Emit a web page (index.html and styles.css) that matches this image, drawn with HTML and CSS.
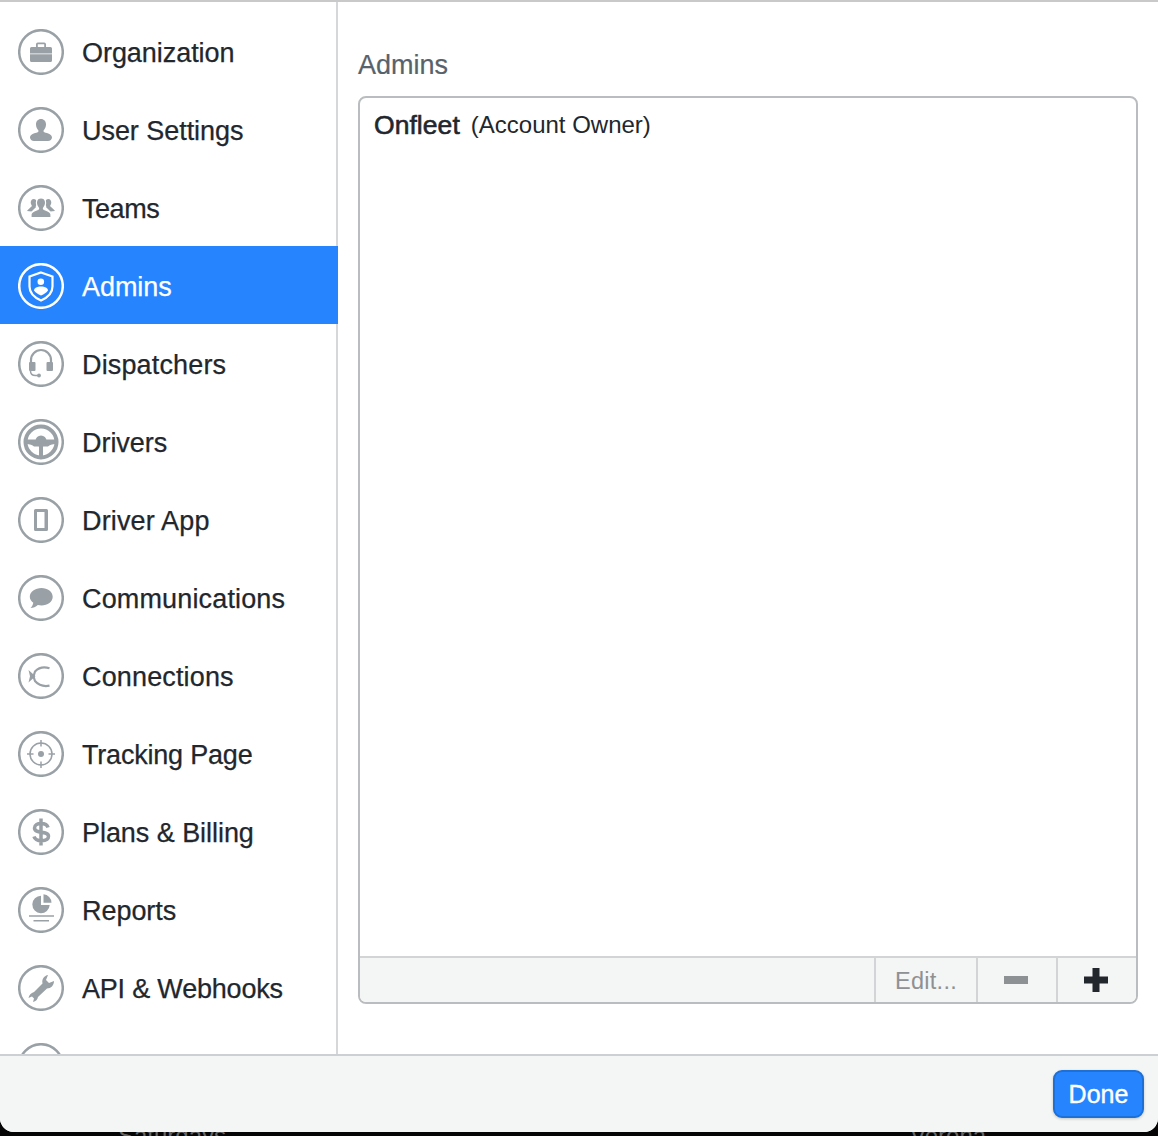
FILE: index.html
```html
<!DOCTYPE html>
<html lang="en">
<head>
<meta charset="utf-8">
<title>Admins</title>
<link rel="stylesheet" href="styles.css">
</head>
<body>
<div class="dialog">
  <div class="main">
    <nav class="sidebar">
      <a class="item"><svg class="ico" viewBox="0 0 46 46"><circle class="ring" cx="23" cy="23" r="21.8"/><path class="fill evenodd" d="M12 19.500a1.500 1.500 0 0 1 1.500-1.500H18v-2.700a1.800 1.800 0 0 1 1.800-1.800h6.400a1.800 1.800 0 0 1 1.800 1.800V18h4.500a1.500 1.500 0 0 1 1.500 1.500v5H12zM19.800 18h6.400v-2.700h-6.400zM12 25.200h22v6.300a1.500 1.500 0 0 1-1.500 1.500h-19a1.500 1.500 0 0 1-1.500-1.500z"/></svg><span>Organization</span></a>
      <a class="item"><svg class="ico" viewBox="0 0 46 46"><circle class="ring" cx="23" cy="23" r="21.800"/><path class="fill" d="M23 12c3 0 5 2.300 5 5.500 0 2.500-1 4.300-2.200 5.700-.6.700-.4 1.600.5 2 3.400 1.100 7.700 2 7.700 5.300 0 1.900-1.800 3.500-4 3.500H16c-2.200 0-4-1.600-4-3.500 0-3.300 4.300-4.200 7.700-5.300.9-.4 1.100-1.300.5-2-1.200-1.400-2.200-3.200-2.200-5.700 0-3.200 2-5.500 5-5.500z"/></svg><span>User Settings</span></a>
      <a class="item"><svg class="ico" viewBox="0 0 46 46"><circle class="ring" cx="23" cy="23" r="21.800"/><path class="fill" d="M15.500 14c2 0 3.500 1.500 3.500 3.600 0 1.300-.5 2.400-1.200 3.300-.3.400-.2.900.3 1.100l-4.600 4.500-4.500-.5 1-1.200 3.500-3.200c.4-.2.500-.6.200-1-.6-.9-1-2-1-3 0-2 1.300-3.600 2.800-3.600zM30.500 14c1.500 0 2.800 1.600 2.800 3.600 0 1-.4 2.100-1 3-.3.400-.2.800.2 1l3.500 3.200 1 1.200-4.500.5-4.600-4.500c.5-.2.600-.7.300-1.100-.7-.9-1.200-2-1.200-3.300 0-2.100 1.500-3.600 3.500-3.600z"/><path class="fill cut" d="M23 13c2.800 0 4.600 2 4.600 4.900 0 2-.9 3.700-1.900 4.900-.5.700-.3 1.300.5 1.700 3 1.100 6.800 2 6.800 5v3H13v-3c0-3 3.800-3.900 6.800-5 .8-.4 1-1 .5-1.700-1-1.200-1.900-2.900-1.900-4.900 0-2.900 1.800-4.900 4.600-4.900z"/></svg><span class="teams">Teams</span></a>
      <a class="item active"><svg class="ico" viewBox="0 0 46 46"><circle class="ring" cx="23" cy="23" r="21.800"/><path class="line thick" d="M23 9.500l11.500 4v10c0 6.500-4.800 11-11.500 14-6.700-3-11.500-7.500-11.500-14v-10z"/><circle class="fill" cx="22.800" cy="18.700" r="3.300"/><path class="fill" d="M16 27.500c0-2.400 3-4 7-4s7 1.600 7 4c-1.400 2-4 3.700-7 4.900-3-1.200-5.600-2.900-7-4.900z"/></svg><span>Admins</span></a>
      <a class="item"><svg class="ico" viewBox="0 0 46 46"><circle class="ring" cx="23" cy="23" r="21.800"/><path class="line thick" d="M13 22v-3a10 10 0 0 1 20 0v3"/><rect class="fill" x="11" y="21" width="6.500" height="9" rx="1"/><rect class="fill" x="28.500" y="21" width="6.500" height="9" rx="1"/><path class="line" d="M12.500 30c0 3 2 4.500 5 4.500h3"/><circle class="fill" cx="21" cy="34.500" r="1.900"/></svg><span class="wide">Dispatchers</span></a>
      <a class="item"><svg class="ico" viewBox="0 0 46 46"><circle class="ring" cx="23" cy="23" r="21.800"/><circle class="line wheel" cx="23" cy="23" r="15.500"/><path class="fill" d="M8 20.500h30v4.500c-4 0-6.500 1-8 2.500h-14c-1.500-1.500-4-2.500-8-2.500z"/><circle class="fill" cx="23" cy="22" r="5.500"/><path class="fill" d="M21 26h4v12h-4z"/></svg><span>Drivers</span></a>
      <a class="item"><svg class="ico" viewBox="0 0 46 46"><circle class="ring" cx="23" cy="23" r="21.800"/><path class="fill evenodd" d="M17.500 12h11a1.500 1.500 0 0 1 1.500 1.500v19a1.500 1.500 0 0 1-1.500 1.500h-11a1.500 1.500 0 0 1-1.500-1.500v-19a1.500 1.500 0 0 1 1.500-1.500zM19 15v16h7.500V15z"/></svg><span class="wide">Driver App</span></a>
      <a class="item"><svg class="ico" viewBox="0 0 46 46"><circle class="ring" cx="23" cy="23" r="21.800"/><path class="fill" d="M23.500 13c6.200 0 11.200 3.800 11.200 8.700s-5 8.700-11.200 8.700c-1.300 0-2.500-.2-3.700-.5-2 1.800-4.500 3.100-7.300 3.100 1.400-1.300 2.400-3 2.800-5.300-2.200-1.500-3.500-3.700-3.500-6 0-4.900 5.500-8.700 11.700-8.700z"/></svg><span class="wide">Communications</span></a>
      <a class="item"><svg class="ico" viewBox="0 0 46 46"><circle class="ring" cx="23" cy="23" r="21.800"/><path class="line thick" d="M31.500 15.300c-5.500-1.800-10.800-.6-14.500 3.200l-1.500 5 1.500 4.500c3.700 4.300 9 5.700 14.500 4.700"/><path class="fill" d="M10.500 17l7 6.300-7 6.200 1.500-6.200z"/></svg><span class="wide">Connections</span></a>
      <a class="item"><svg class="ico" viewBox="0 0 46 46"><circle class="ring" cx="23" cy="23" r="21.800"/><circle class="line" cx="23" cy="23" r="11"/><circle class="fill" cx="23" cy="23" r="3"/><path class="line" d="M23 9v6.500M23 30.500V37M9 23h6.500M30.500 23H37"/></svg><span class="tight">Tracking Page</span></a>
      <a class="item"><svg class="ico" viewBox="0 0 46 46"><circle class="ring" cx="23" cy="23" r="21.800"/><path class="line dollar" d="M30 18.500c-.7-2.700-3.400-4-7-4-3.800 0-6.500 1.700-6.500 4.400 0 6.300 14 2.400 14 8.400 0 2.800-2.900 4.400-7 4.400-4 0-6.700-1.400-7.500-4.200M23 9.500v27"/></svg><span>Plans &amp; Billing</span></a>
      <a class="item"><svg class="ico" viewBox="0 0 46 46"><circle class="ring" cx="23" cy="23" r="21.800"/><path class="fill" d="M23 8.800v9.200h8.700a8.700 8.700 0 1 1-8.700-9.200z"/><path class="fill" d="M25.500 7.300a8.400 8.400 0 0 1 8 8.400h-8z"/><path class="line" d="M11 29h25M15.500 33.700H31"/></svg><span>Reports</span></a>
      <a class="item"><svg class="ico" viewBox="0 0 46 46"><circle class="ring" cx="23" cy="23" r="21.800"/><path class="fill" d="M30 10l-2 5 3 3 5-2c0 4.500-3 7.500-7 7.500L20 32c-.5 2.500-2 4.500-5 5l1-3.500-2-2-3.500 1.500c.5-3 2.500-5 5.500-6l8.500-8.500c-1-4.500 2-7.900 5.500-8.500z"/></svg><span class="tight">API &amp; Webhooks</span></a>
      <a class="item"><svg class="ico" viewBox="0 0 46 46"><circle class="ring" cx="23" cy="23" r="21.800"/></svg></a>
    </nav>
    <section class="content">
      <h2 class="title">Admins</h2>
      <div class="panel">
        <div class="list">
          <div class="entry"><strong>Onfleet</strong><span class="role">(Account Owner)</span></div>
        </div>
        <div class="tools">
          <button class="tool edit">Edit...</button>
          <button class="tool glyph"><svg class="sign" viewBox="0 0 26 26"><path class="minus" d="M1 9h24v8H1z"/></svg></button>
          <button class="tool glyph"><svg class="sign" viewBox="0 0 26 26"><path class="plus" d="M9.500 1h7v8.500H25v7h-8.500V25h-7v-8.500H1v-7h8.500z"/></svg></button>
        </div>
      </div>
    </section>
  </div>
  <footer class="footer"><button class="done">Done</button></footer>
</div>
<div class="behind"><span>Saturdays</span><span>Verona</span></div>
</body>
</html>
```

FILE: styles.css
```css
* { box-sizing: border-box; }
html, body { margin: 0; height: 100%; }
body {
  width: 1158px;
  height: 1136px;
  overflow: hidden;
  background: #050505;
  font-family: "Liberation Sans", Arial, sans-serif;
  color: #22272d;
}
.dialog {
  height: 1132px;
  display: flex;
  flex-direction: column;
  background: #fff;
  border-top: 2px solid #c9c9c9;
  border-radius: 0 0 14px 14px;
  overflow: hidden;
}
.main { flex: 1; display: flex; min-height: 0; }
.sidebar {
  width: 338px;
  flex: none;
  padding-top: 10px;
  background: linear-gradient(to left, #d6d7d8 2px, transparent 2px);
  overflow: hidden;
}
.item {
  display: flex;
  align-items: center;
  height: 78px;
  padding: 1px 0 0 18px;
  gap: 18px;
  font-size: 27px;
  letter-spacing: -0.05px;
  -webkit-text-stroke: 0.25px currentColor;
}
.item span { padding-top: 4px; }
.item .wide { letter-spacing: 0.15px; }
.item .tight { letter-spacing: -0.2px; }
.item .teams { letter-spacing: -0.45px; }
.item.active { background: #2684ff; color: #fff; }
.ico { width: 46px; height: 46px; flex: none; }
.ring { fill: none; stroke: #99a1a6; stroke-width: 2.500; }
.fill { fill: #99a1a6; }
.evenodd { fill-rule: evenodd; }
.cut { stroke: #fff; stroke-width: 1.200; }
.line { fill: none; stroke: #99a1a6; stroke-width: 1.500; }
.thick { stroke-width: 2.200; }
.wheel { stroke-width: 4; }
.dollar { stroke-width: 3.500; }
.active .ring, .active .line { stroke: #fff; }
.active .fill { fill: #fff; }
.content { flex: 1; padding: 48px 20px 0; min-width: 0; }
.title {
  margin: 0 0 16px;
  font-size: 27px;
  line-height: 30px;
  font-weight: 400;
  color: #58626b;
  -webkit-text-stroke: 0.2px #58626b;
}
.panel {
  height: 908px;
  display: flex;
  flex-direction: column;
  border: 2px solid #babdbf;
  border-radius: 8px;
  overflow: hidden;
}
.list { flex: 1; padding: 12px 14px; }
.entry { font-size: 24px; line-height: 30px; }
.entry strong {
  margin-right: 11px;
  font-size: 26.500px;
  font-weight: 400;
  letter-spacing: 0.05px;
  -webkit-text-stroke: 0.6px #22272d;
}
.role { vertical-align: 1px; }
.tools {
  height: 46px;
  flex: none;
  display: flex;
  justify-content: flex-end;
  background: #f4f5f5;
  border-top: 2px solid #d2d4d5;
}
.tool {
  border: 0;
  border-left: 2px solid #d2d4d5;
  background: none;
  padding: 0;
  font: inherit;
  display: flex;
  align-items: center;
  justify-content: center;
}
.edit { width: 102px; padding-top: 2px; font-size: 23.500px; letter-spacing: 0.3px; color: #8e9193; }
.glyph { width: 80px; padding-right: 2px; }
.sign { width: 26px; height: 26px; }
.minus { fill: #8e9193; }
.plus { fill: #22272d; }
.footer {
  height: 78px;
  flex: none;
  display: flex;
  justify-content: flex-end;
  align-items: flex-start;
  padding: 14px 14px 0 0;
  background: #f4f5f5;
  border-top: 2px solid #cdd0d3;
}
.done {
  width: 91px;
  height: 48px;
  border: 2px solid #1e6fd6;
  border-radius: 9px;
  background: #2684ff;
  color: #fff;
  font-family: inherit;
  font-size: 25px;
  -webkit-text-stroke: 0.4px #fff;
  box-shadow: 0 1px 3px rgba(0, 0, 0, .2);
}
.behind {
  height: 4px;
  overflow: hidden;
  display: flex;
  color: #666;
  font-size: 24px;
  line-height: 8px;
  padding-left: 118px;
  gap: 684px;
}
```
